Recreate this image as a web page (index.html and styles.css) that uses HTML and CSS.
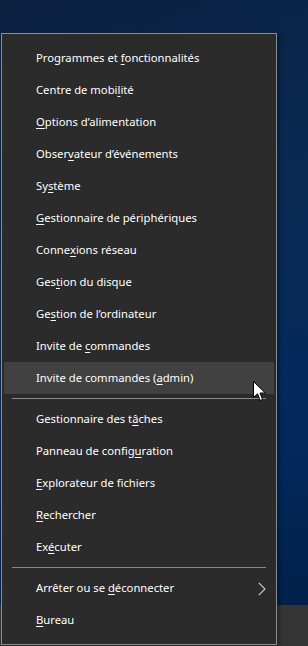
FILE: index.html
```html
<!DOCTYPE html>
<html>
<head>
    <link rel="stylesheet" href="styles.css">
</head>
<body>
    <div class="desktop">
        <div class="menu">
            <div class="group">
                <div class="item">Programmes et <u>f</u>onctionnalités</div>
                <div class="item">Centre de mobi<u>l</u>ité</div>
                <div class="item"><u>O</u>ptions d’alimentation</div>
                <div class="item">Obser<u>v</u>ateur d’événements</div>
                <div class="item">Sy<u>s</u>tème</div>
                <div class="item"><u>G</u>estionnaire de périphériques</div>
                <div class="item">Conne<u>x</u>ions réseau</div>
                <div class="item">Ges<u>t</u>ion du disque</div>
                <div class="item">Ge<u>s</u>tion de l’ordinateur</div>
                <div class="item">Invite de <u>c</u>ommandes</div>
                <div class="item hover">Invite de commandes (<u>a</u>dmin)
                    <!-- mouse pointer sits over the hovered row -->
                    <svg class="cursor" width="13" height="21" viewBox="0 0 13 21">
                        <path d="M0.5 0.5 L0.5 16.5 L4.5 12.8 L7.2 19.5 L9.6 18.5 L7 12 L12.3 12 Z" fill="#fff" stroke="#000" stroke-width="1"/>
                    </svg>
                </div>
            </div>
            <div class="sep"></div>
            <div class="group">
                <div class="item">Gestionnaire des t<u>â</u>ches</div>
                <div class="item">Panneau de config<u>u</u>ration</div>
                <div class="item"><u>E</u>xplorateur de fichiers</div>
                <div class="item"><u>R</u>echercher</div>
                <div class="item">Ex<u>é</u>cuter</div>
            </div>
            <div class="sep"></div>
            <div class="group">
                <div class="item submenu">Arrêter ou se <u>d</u>éconnecter
                    <svg class="chevron" width="8" height="14" viewBox="0 0 8 14">
                        <path d="M0.8 0.8 L7 7 L0.8 13.2" fill="none" stroke="#cfcfcf" stroke-width="1.1"/>
                    </svg>
                </div>
                <div class="item"><u>B</u>ureau</div>
            </div>
        </div>
    </div>
</body>
</html>
```

FILE: styles.css
```css
html, body {
    margin: 0;
    padding: 0;
}

.desktop {
    width: 308px;
    height: 646px;
    overflow: hidden;
    background: linear-gradient(to bottom, transparent 0, transparent 605px, #353535 605px),
                linear-gradient(160deg, #0a2140 0%, #0a2a55 40%, #03295c 70%, #021f48 100%);
    padding-top: 33px;
    padding-left: 1px;
    box-sizing: border-box;
}

.menu {
    width: 276px;
    box-sizing: border-box;
    background: #2b2b2b;
    border: 1px solid #8c8c8c;
    padding: 8px 2px 8px 2px;
    box-shadow: 2px 2px 4px rgba(0, 0, 0, 0.35);
    font-family: "Noto Sans", sans-serif;
    font-size: 11.25px;
    color: #fff;
}

.item {
    position: relative;
    height: 32px;
    line-height: 32px;
    padding-left: 32px;
    white-space: nowrap;
}

.item u {
    text-decoration: underline;
    text-underline-offset: 2px;
}

.hover {
    background: #414141;
}

.sep {
    height: 1px;
    background: #8a8a8a;
    margin: 4px 8px 4px 8px;
}

.cursor {
    position: absolute;
    left: 249px;
    top: 19px;
}

.chevron {
    position: absolute;
    left: 254px;
    top: 10px;
}
```
